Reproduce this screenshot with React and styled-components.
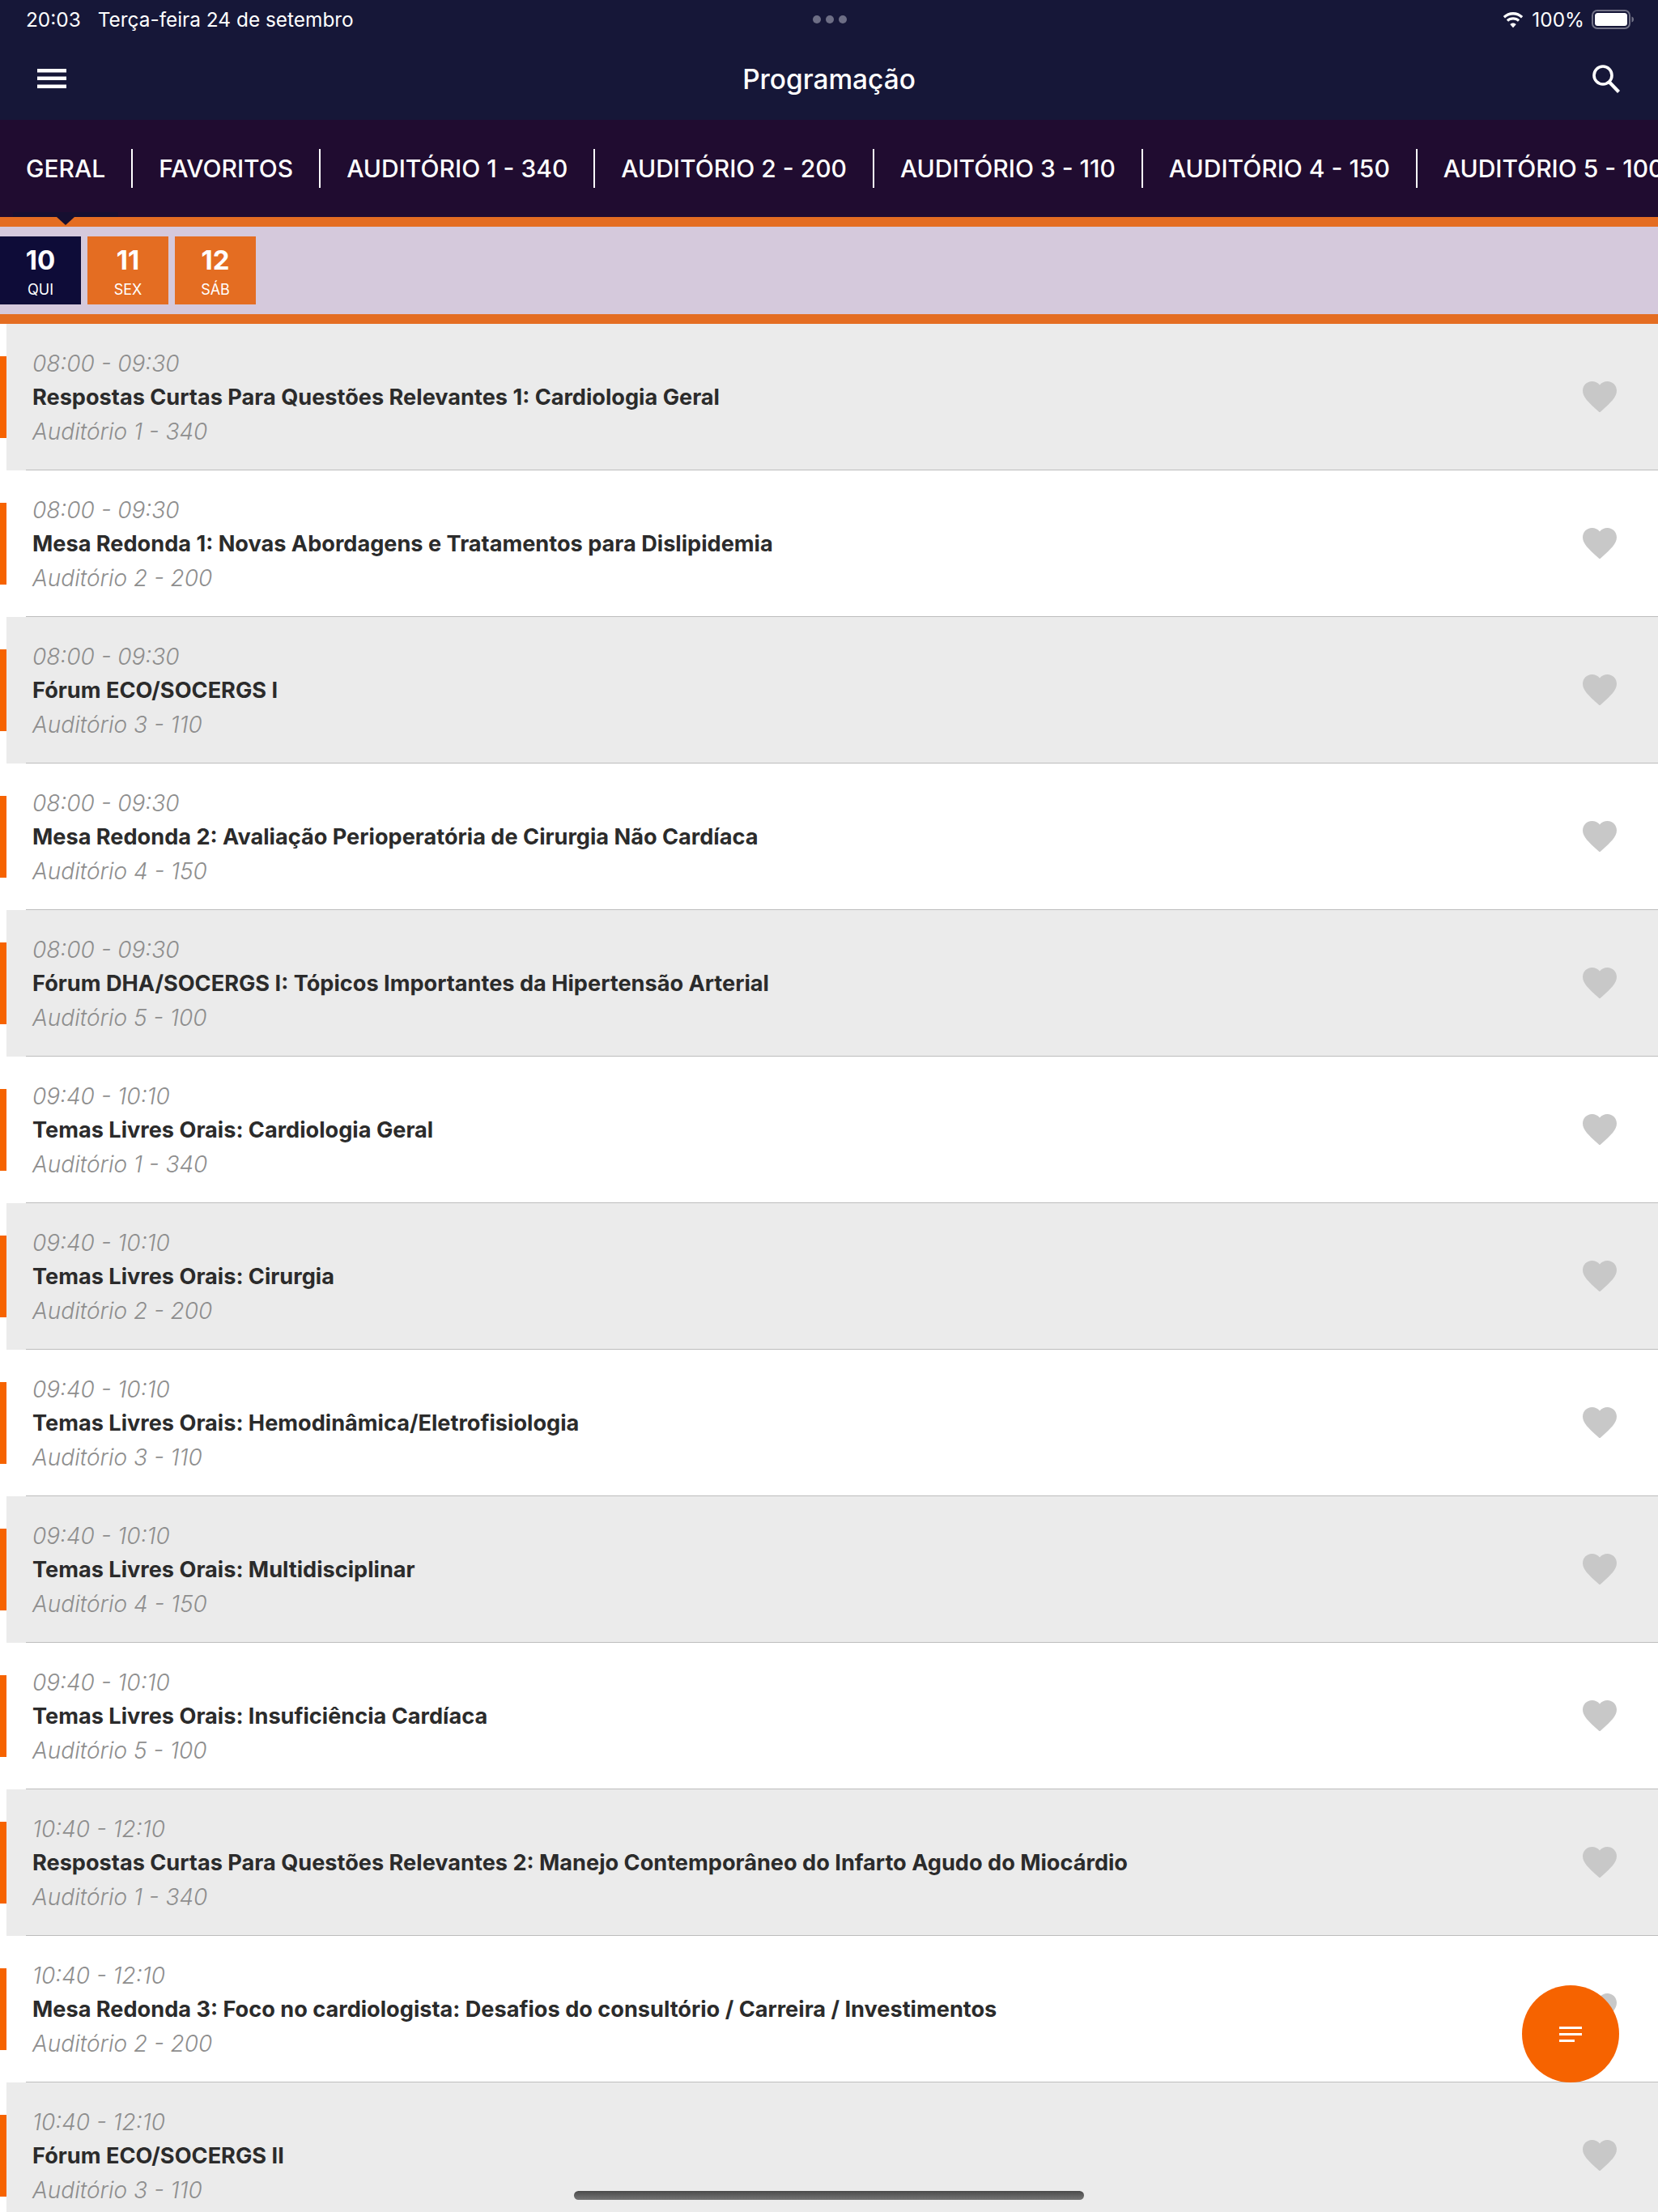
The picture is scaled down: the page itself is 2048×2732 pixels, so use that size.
import React from 'react'
import styled, { createGlobalStyle } from 'styled-components'

const GlobalStyle = createGlobalStyle`
html, body {
  margin: 0;
  padding: 0;
  background: #fff;
  overflow: hidden;
}
* { box-sizing: border-box; }
`

const tabs = ['GERAL', 'FAVORITOS', 'AUDITÓRIO 1 - 340', 'AUDITÓRIO 2 - 200', 'AUDITÓRIO 3 - 110', 'AUDITÓRIO 4 - 150', 'AUDITÓRIO 5 - 100']

const days = [
  { num: '10', label: 'QUI', active: true },
  { num: '11', label: 'SEX' },
  { num: '12', label: 'SÁB' },
]

const A1 = 'Auditório 1 - 340'
const A2 = 'Auditório 2 - 200'
const A3 = 'Auditório 3 - 110'
const A4 = 'Auditório 4 - 150'
const A5 = 'Auditório 5 - 100'

const sessions = [
  ['08:00 - 09:30', 'Respostas Curtas Para Questões Relevantes 1: Cardiologia Geral', A1],
  ['08:00 - 09:30', 'Mesa Redonda 1: Novas Abordagens e Tratamentos para Dislipidemia', A2],
  ['08:00 - 09:30', 'Fórum ECO/SOCERGS I', A3],
  ['08:00 - 09:30', 'Mesa Redonda 2: Avaliação Perioperatória de Cirurgia Não Cardíaca', A4],
  ['08:00 - 09:30', 'Fórum DHA/SOCERGS I: Tópicos Importantes da Hipertensão Arterial', A5],
  ['09:40 - 10:10', 'Temas Livres Orais: Cardiologia Geral', A1],
  ['09:40 - 10:10', 'Temas Livres Orais: Cirurgia', A2],
  ['09:40 - 10:10', 'Temas Livres Orais: Hemodinâmica/Eletrofisiologia', A3],
  ['09:40 - 10:10', 'Temas Livres Orais: Multidisciplinar', A4],
  ['09:40 - 10:10', 'Temas Livres Orais: Insuficiência Cardíaca', A5],
  ['10:40 - 12:10', 'Respostas Curtas Para Questões Relevantes 2: Manejo Contemporâneo do Infarto Agudo do Miocárdio', A1],
  ['10:40 - 12:10', 'Mesa Redonda 3: Foco no cardiologista: Desafios do consultório / Carreira / Investimentos', A2],
  ['10:40 - 12:10', 'Fórum ECO/SOCERGS II', A3],
]

function Heart() {
  return (
    <HeartIcon viewBox="2 3 20 18.35">
      <path d="M12 21.35l-1.45-1.32C5.4 15.36 2 12.28 2 8.5 2 5.42 4.42 3 7.5 3c1.74 0 3.41.81 4.5 2.09C13.09 3.81 14.76 3 16.5 3 19.58 3 22 5.42 22 8.5c0 3.78-3.4 6.86-8.55 11.54L12 21.35z" />
    </HeartIcon>
  )
}

function App() {
  return (
    <Page>
      <GlobalStyle />
      <Header>
        <StatusBar>
          <StatusLeft>
            <span>20:03</span>
            <span>Terça-feira 24 de setembro</span>
          </StatusLeft>
          <Dots><i /><i /><i /></Dots>
          <StatusRight>
            <svg width="28" height="21" viewBox="0 0 28 21">
              <path d="M14 4.5c3.9 0 7.4 1.5 10 4l2.2-2.4C22.9 2.9 18.7 1 14 1S5.1 2.900 1.800 6.100L4 8.500c2.600-2.500 6.100-4 10-4z" fill="#fff" />
              <path d="M14 10.500c2.300 0 4.300.9 5.900 2.300l2.200-2.400C20 8.400 17.100 7.200 14 7.200s-6 1.200-8.100 3.200l2.200 2.400c1.600-1.400 3.600-2.300 5.900-2.300z" fill="#fff" />
              <path d="M14 14.500c-1.500 0-2.800.6-3.800 1.500l3.800 4.200 3.800-4.200c-1-.9-2.300-1.500-3.800-1.500z" fill="#fff" />
            </svg>
            <span>100%</span>
            <svg width="54" height="24" viewBox="0 0 54 24">
              <rect x="1" y="1" width="46" height="22" rx="6" fill="none" stroke="#fff" strokeOpacity="0.4" strokeWidth="2" />
              <rect x="4" y="4" width="40" height="16" rx="3.500" fill="#fff" />
              <path d="M49.500 8.500c1.600.5 2.500 1.800 2.500 3.500s-.9 3-2.500 3.500z" fill="#fff" fillOpacity="0.4" />
            </svg>
          </StatusRight>
        </StatusBar>
        <NavBar>
          <MenuButton>
            <svg width="36" height="24" viewBox="0 0 36 24">
              <rect x="0" y="0" width="36" height="4.500" fill="#fff" />
              <rect x="0" y="9.500" width="36" height="4.500" fill="#fff" />
              <rect x="0" y="19.500" width="36" height="4.500" fill="#fff" />
            </svg>
          </MenuButton>
          <Title>Programação</Title>
          <SearchButton>
            <svg width="36" height="36" viewBox="0 0 36 36" fill="none" stroke="#fff">
              <circle cx="14" cy="14" r="11" strokeWidth="3.600" />
              <path d="M22 22.500L33.500 34.500" strokeWidth="4.200" />
            </svg>
          </SearchButton>
        </NavBar>
      </Header>
      <Tabs>
        {tabs.map((tab, i) => (
          <Tab key={tab} last={i === tabs.length - 1}>
            <span>{tab}</span>
          </Tab>
        ))}
        <TabIndicator />
      </Tabs>
      <DayBar>
        {days.map(day => (
          <Day key={day.num} active={day.active}>
            <DayNum>{day.num}</DayNum>
            <DayLabel>{day.label}</DayLabel>
          </Day>
        ))}
      </DayBar>
      <List>
        {sessions.map(([time, title, room], i) => (
          <Row key={i}>
            <Marker />
            <RowBody shaded={i % 2 === 0}>
              <RowContent>
                <RowText>
                  <Meta>{time}</Meta>
                  <RowTitle>{title}</RowTitle>
                  <Meta>{room}</Meta>
                </RowText>
                <Heart />
              </RowContent>
            </RowBody>
          </Row>
        ))}
      </List>
      <Fab>
        <svg width="28" height="19" viewBox="0 0 28 19">
          <rect x="0" y="0" width="28" height="3" fill="#fff" />
          <rect x="0" y="8" width="28" height="3" fill="#fff" />
          <rect x="0" y="16" width="19" height="3" fill="#fff" />
        </svg>
      </Fab>
      <HomeIndicator />
    </Page>
  )
}

export default App

const Page = styled.div`
position: relative;
width: 2048px;
height: 2732px;
overflow: hidden;
background: #fff;
font-family: Inter, "Liberation Sans", sans-serif;
`
const Header = styled.div`
height: 148px;
background: #161738;
color: #fff;
`
const StatusBar = styled.div`
display: grid;
grid-template-columns: 1fr auto 1fr;
align-items: center;
height: 48px;
padding: 0 28px 0 32px;
font-size: 24.4px;
`
const StatusLeft = styled.div`
display: flex;
gap: 21px;
`
const StatusRight = styled.div`
display: flex;
align-items: center;
justify-content: flex-end;
gap: 9px;
`
const Dots = styled.div`
display: flex;
gap: 6px;
margin-left: -3px;
i {
  width: 10px;
  height: 10px;
  border-radius: 50%;
  background: #6d6e85;
}
`
const NavBar = styled.div`
display: flex;
align-items: center;
justify-content: space-between;
height: 100px;
padding: 0 46px 0 46px;
`
const MenuButton = styled.div`
display: flex;
margin-top: -2px;
`
const SearchButton = styled.div`
display: flex;
margin-top: -2px;
`
const Title = styled.div`
font-size: 33.4px;
font-weight: 500;
`
const Tabs = styled.div`
position: relative;
display: flex;
align-items: center;
height: 120px;
background: #200c30;
overflow: hidden;
`
const Tab = styled.div`
flex: none;
display: flex;
align-items: center;
height: 48px;
padding: 0 32px;
border-right: ${props => props.last ? 'none' : '2px solid #fff'};
color: #fff;
font-size: 30px;
font-weight: 500;
white-space: nowrap;
`
const TabIndicator = styled.div`
position: absolute;
left: 16px;
bottom: 0;
width: 130px;
height: 6px;
background: #160f30;
`
const DayBar = styled.div`
position: relative;
display: flex;
align-items: center;
gap: 8px;
height: 132px;
background: #d5c9dc;
border-top: 12px solid #e46d22;
border-bottom: 12px solid #e46d22;
&::before {
  content: '';
  position: absolute;
  left: 70px;
  top: -12px;
  border-left: 11px solid transparent;
  border-right: 11px solid transparent;
  border-top: 10px solid #160f30;
}
`
const Day = styled.div`
width: 100px;
height: 84px;
display: flex;
flex-direction: column;
align-items: center;
color: #fff;
background: ${props => props.active ? '#0e0c38' : '#e46d22'};
`
const DayNum = styled.div`
margin-top: 10px;
font-size: 33px;
font-weight: 700;
line-height: 38px;
`
const DayLabel = styled.div`
margin-top: 7px;
font-size: 18px;
line-height: 22px;
`
const List = styled.div`
display: flex;
flex-direction: column;
`
const Row = styled.div`
display: flex;
align-items: center;
height: 181px;
flex: none;
`
const Marker = styled.div`
flex: none;
width: 8px;
height: 101px;
background: #f66300;
`
const RowBody = styled.div`
flex: 1;
height: 100%;
background: ${props => props.shaded ? '#ebebeb' : '#fff'};
padding-left: 24px;
`
const RowContent = styled.div`
display: flex;
align-items: center;
justify-content: space-between;
height: 100%;
padding: 0 51px 0 8px;
border-bottom: 1px solid #bdbdbd;
`
const RowText = styled.div`
display: flex;
flex-direction: column;
margin-top: 1px;
`
const Meta = styled.div`
font-size: 28px;
font-weight: 300;
font-style: italic;
line-height: 42px;
color: #8e8e8e;
`
const RowTitle = styled.div`
font-size: 27.15px;
font-weight: 700;
line-height: 42px;
color: #2b2b2b;
`
const HeartIcon = styled.svg`
flex: none;
width: 42px;
height: 38.5px;
fill: #c8c8c8;
`
const Fab = styled.div`
position: absolute;
left: 1880px;
top: 2452px;
width: 120px;
height: 120px;
display: flex;
align-items: center;
justify-content: center;
border-radius: 50%;
background: #f66300;
`
const HomeIndicator = styled.div`
position: absolute;
left: 709px;
top: 2706px;
width: 630px;
height: 11px;
border-radius: 6px;
background: linear-gradient(#4a4a4a, #757575);
`
